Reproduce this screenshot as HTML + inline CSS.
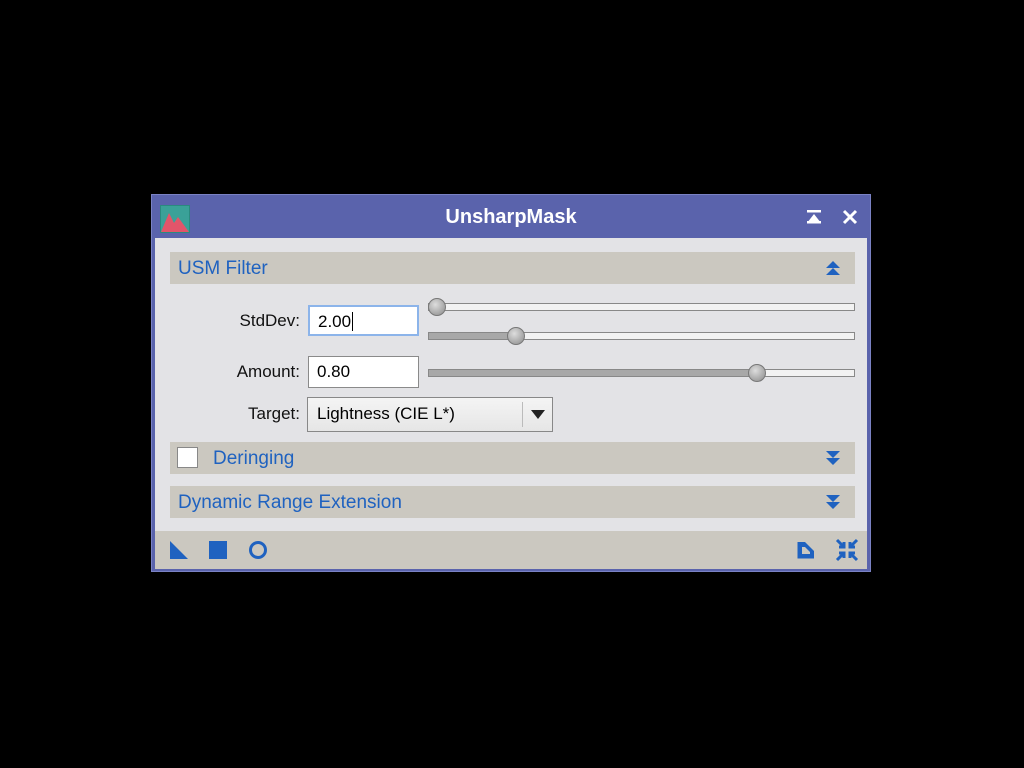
<!DOCTYPE html><html><head><style>
body{margin:0;width:1024px;height:768px;background:#000;position:relative;font-family:"Liberation Sans",sans-serif;overflow:hidden}
.a{position:absolute}
.win{left:151px;top:194px;width:720px;height:378px;background:#5a63ac;border:1.5px solid #7a82c4;box-sizing:border-box}
.title{left:0;top:0;width:718px;height:43px;color:#fff;font-weight:bold;font-size:20px;text-align:center;line-height:45px}
.body{left:3px;top:43px;width:712px;height:331px;background:#e3e3e6}
.bar{background:#cbc8c0;height:32px;left:15px;width:685px;color:#1f62c0;font-size:19px;line-height:33px}
.lbl{font-size:17px;color:#111;text-align:right;width:140px}
.inp{background:#fff;border:1px solid #8a8a8a;font-size:17px;line-height:30px;padding-left:8px;box-sizing:border-box}
.track{height:6px;background:#f2f2f2;border:1px solid #888;box-sizing:content-box}
.fill{height:6px;background:#a8a8a8}
.th{width:16px;height:16px;border-radius:50%;background:radial-gradient(circle at 40% 35%,#ddd,#8a8a8a);border:1px solid #777}
</style></head><body>
<div class="a win">
<div class="a title">UnsharpMask</div>
<svg class="a" style="left:8px;top:10px" width="30" height="28"><rect x="0" y="0" width="30" height="28" fill="#2a8a80"/><rect x="1" y="1" width="28" height="26" fill="#3aa198"/><path d="M1 27 L9 8 L14 18 L18 12 L29 27Z" fill="#e2556a"/></svg>
<svg class="a" style="left:654px;top:15px" width="16" height="14"><rect x="1" y="0" width="14" height="2.5" fill="#fff"/><path d="M1 13 L8 4 L15 13Z" fill="#fff"/><rect x="1" y="11" width="14" height="2.5" fill="#fff"/></svg>
<svg class="a" style="left:690px;top:14px" width="16" height="16"><path d="M2 2L14 14M14 2L2 14" stroke="#fff" stroke-width="3"/></svg>
<div class="a body">
<div class="a bar" style="top:14px"><span style="padding-left:8px">USM Filter</span>
<svg class="a" style="right:14px;top:8px" width="16" height="16"><path d="M1 8L8 1L15 8Z M1 15L8 8L15 15Z" fill="#1f62c0"/></svg></div>
<div class="a lbl" style="left:5px;top:73px">StdDev:</div>
<div class="a inp" style="left:153px;top:67px;width:111px;height:31px;border:2px solid #8cb4ea">2.00<span style="border-left:1.5px solid #000;margin-left:1px"></span></div>
<div class="a track" style="left:273px;top:65px;width:425px"></div>
<div class="a th" style="left:273px;top:60px"></div>
<div class="a track" style="left:273px;top:94px;width:425px"><div class="fill" style="width:88px"></div></div>
<div class="a th" style="left:352px;top:89px"></div>
<div class="a lbl" style="left:5px;top:124px">Amount:</div>
<div class="a inp" style="left:153px;top:118px;width:111px;height:32px">0.80</div>
<div class="a track" style="left:273px;top:131px;width:425px"><div class="fill" style="width:329px"></div></div>
<div class="a th" style="left:593px;top:126px"></div>
<div class="a lbl" style="left:5px;top:166px">Target:</div>
<div class="a" style="left:152px;top:159px;width:244px;height:33px;border:1px solid #888;background:linear-gradient(#f4f4f4,#e6e6e6);font-size:17px;line-height:32px"><span style="padding-left:9px">Lightness (CIE L*)</span>
<div class="a" style="left:214px;top:4px;height:25px;border-left:1px solid #bbb"></div>
<svg class="a" style="left:223px;top:12px" width="14" height="9"><path d="M0 0H14L7 9Z" fill="#222"/></svg></div>
<div class="a bar" style="top:204px"><div class="a" style="left:7px;top:5px;width:19px;height:19px;background:#fff;border:1px solid #888"></div><span style="padding-left:43px">Deringing</span>
<svg class="a" style="right:14px;top:8px" width="16" height="16"><path d="M1 1L8 8L15 1Z M1 8L8 15L15 8Z" fill="#1f62c0"/></svg></div>
<div class="a bar" style="top:248px"><span style="padding-left:8px">Dynamic Range Extension</span>
<svg class="a" style="right:14px;top:8px" width="16" height="16"><path d="M1 1L8 8L15 1Z M1 8L8 15L15 8Z" fill="#1f62c0"/></svg></div>
<div class="a" style="left:0;top:293px;width:712px;height:38px;background:#cbc8c0">
<svg class="a" style="left:15px;top:10px" width="18" height="18"><path d="M0 0L18 18H0Z" fill="#1f62c0"/></svg>
<div class="a" style="left:54px;top:10px;width:18px;height:18px;background:#1f62c0"></div>
<svg class="a" style="left:93px;top:9px" width="20" height="20"><circle cx="10" cy="10" r="7.5" fill="none" stroke="#1f62c0" stroke-width="3"/></svg>
<svg class="a" style="left:641px;top:9px" width="20" height="20"><path d="M1.5 2H9L18 11V18.5H1.5Z M6 7V14H14V12L9 7Z" fill="#1f62c0" fill-rule="evenodd"/></svg>
<svg class="a" style="left:680px;top:7px" width="24" height="24"><path d="M2 2L9 9M9 4V9H4M22 2L15 9M15 4V9H20M2 22L9 15M9 20V15H4M22 22L15 15M15 20V15H20" stroke="#1f62c0" stroke-width="3" fill="none"/></svg>
</div>
</div></div>
</body></html>
